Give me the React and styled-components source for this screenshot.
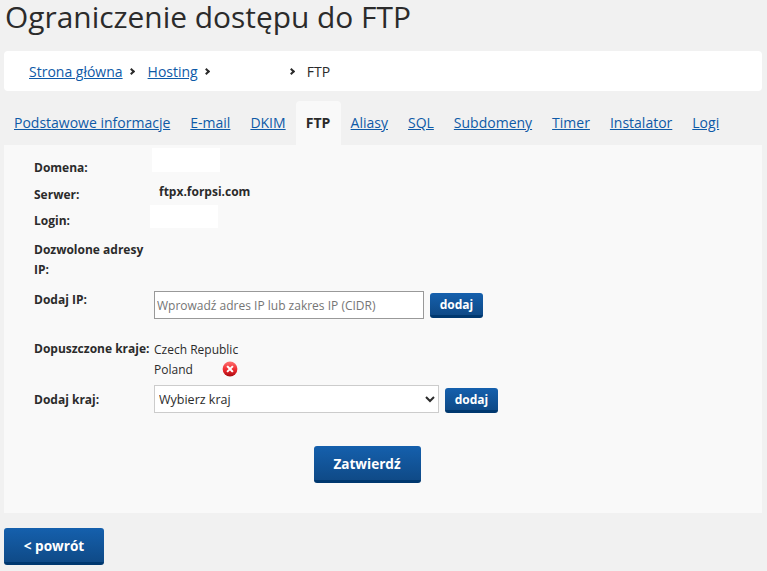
import styled, { createGlobalStyle } from 'styled-components';

const GlobalStyle = createGlobalStyle`
  html, body {
    margin: 0;
    padding: 0;
    background: #f1f1f1;
    color: #2b2b2b;
    font-family: "Open Sans", "Noto Sans", sans-serif;
    font-size: 14px;
  }
  * {
    box-sizing: border-box;
  }
`;

const tabs = ['Podstawowe informacje', 'E-mail', 'DKIM', 'FTP', 'Aliasy', 'SQL', 'Subdomeny', 'Timer', 'Instalator', 'Logi'];

function RemoveIcon() {
  return (
    <svg width="16" height="16" viewBox="0 0 16 16">
      <defs>
        <linearGradient id="removeFill" x1="0" y1="0" x2="0" y2="1">
          <stop offset="0%" stopColor="#ff6f6f" />
          <stop offset="55%" stopColor="#ee2a2f" />
          <stop offset="100%" stopColor="#a90a10" />
        </linearGradient>
      </defs>
      <circle cx="8" cy="8" r="7.4" fill="url(#removeFill)" />
      <path d="M5.8 5.8l4.4 4.4M10.2 5.8l-4.4 4.4" stroke="#fff" strokeWidth="2" strokeLinecap="square" />
    </svg>
  );
}

function App() {
  return (
    <Page>
      <GlobalStyle />
      <Title>Ograniczenie dostępu do FTP</Title>
      <Breadcrumb>
        <CrumbLink href="#">Strona główna</CrumbLink>
        <Chevron />
        <CrumbLink href="#">Hosting</CrumbLink>
        <Chevron />
        <HiddenCrumb />
        <Chevron />
        <CurrentCrumb>FTP</CurrentCrumb>
      </Breadcrumb>
      <TabBar>
        {tabs.map((tab) => (
          <Tab key={tab} href="#" $active={tab === 'FTP'}>{tab}</Tab>
        ))}
      </TabBar>
      <Panel>
        <InfoRow $height={27}>
          <Label>Domena:</Label>
          <Redacted $width={68} $height={24} $left={-2} $top={-10} />
        </InfoRow>
        <InfoRow $height={26}>
          <Label>Serwer:</Label>
          <ServerValue>ftpx.forpsi.com</ServerValue>
        </InfoRow>
        <InfoRow $height={29}>
          <Label>Login:</Label>
          <Redacted $width={68} $height={23} $left={-4} $top={-6} />
        </InfoRow>
        <InfoRow $height={50}>
          <Label>Dozwolone adresy IP:</Label>
        </InfoRow>
        <InfoRow $height={49}>
          <Label>Dodaj IP:</Label>
          <Controls $top={1}>
            <IpInput placeholder="Wprowadź adres IP lub zakres IP (CIDR)" />
            <SmallButton $top={2}>dodaj</SmallButton>
          </Controls>
        </InfoRow>
        <InfoRow $height={51}>
          <Label>Dopuszczone kraje:</Label>
          <CountryList>
            <Country>Czech Republic</Country>
            <Country>
              Poland
              <RemoveWrap><RemoveIcon /></RemoveWrap>
            </Country>
          </CountryList>
        </InfoRow>
        <InfoRow $height={56}>
          <Label>Dodaj kraj:</Label>
          <Controls $top={-5}>
            <CountrySelect defaultValue="">
              <option value="">Wybierz kraj</option>
            </CountrySelect>
            <SmallButton $top={3}>dodaj</SmallButton>
          </Controls>
        </InfoRow>
        <SubmitRow>
          <BigButton>Zatwierdź</BigButton>
        </SubmitRow>
      </Panel>
      <BackRow>
        <BackButton>&lt; powrót</BackButton>
      </BackRow>
    </Page>
  );
}

export default App;

const Page = styled.div`
  width: 767px;
  height: 571px;
  padding: 0 5px 0 4px;
  overflow: hidden;
`;

const Title = styled.h1`
  margin: 0;
  height: 51px;
  padding-left: 1px;
  font-size: 29.9px;
  font-weight: 400;
  line-height: 33px;
  color: #2b2b2b;
`;

const Breadcrumb = styled.nav`
  display: flex;
  align-items: center;
  height: 40px;
  padding-left: 25px;
  background: #fff;
  border-radius: 4px;
  font-size: 14px;
`;

const CrumbLink = styled.a`
  color: #0e5aa7;
  text-decoration: underline;
`;

const CurrentCrumb = styled.span`
  margin-left: -1px;
`;

const Chevron = styled.i`
  width: 5px;
  height: 5px;
  margin: 0 14px 0 6px;
  border-top: 2px solid #2b2b2b;
  border-right: 2px solid #2b2b2b;
  transform: rotate(45deg);
`;

const HiddenCrumb = styled.span`
  width: 60px;
`;

const TabBar = styled.div`
  display: flex;
  height: 44px;
  margin-top: 10px;
`;

const Tab = styled.a`
  display: flex;
  align-items: center;
  height: 44px;
  padding: 0 ${({ $active }) => ($active ? '10.2px' : '10px')} 2px;
  border-radius: 4px 4px 0 0;
  font-size: 14px;
  font-weight: ${({ $active }) => ($active ? 700 : 400)};
  color: ${({ $active }) => ($active ? '#2b2b2b' : '#0e5aa7')};
  background: ${({ $active }) => ($active ? '#f9f9f9' : 'transparent')};
  text-decoration: ${({ $active }) => ($active ? 'none' : 'underline')};
`;

const Panel = styled.section`
  height: 368px;
  padding: 13px 30px 0;
  background: #f9f9f9;
`;

const InfoRow = styled.div`
  display: flex;
  align-items: flex-start;
  height: ${({ $height }) => $height}px;
`;

const Label = styled.div`
  flex: none;
  width: 120px;
  font-size: 12px;
  font-weight: 700;
  line-height: 20px;
`;

const Redacted = styled.div`
  position: relative;
  left: ${({ $left }) => $left}px;
  top: ${({ $top }) => $top}px;
  width: ${({ $width }) => $width}px;
  height: ${({ $height }) => $height}px;
  background: #fff;
`;

const ServerValue = styled.div`
  margin: -3px 0 0 5px;
  font-size: 12px;
  font-weight: 700;
  line-height: 20px;
`;

const Controls = styled.div`
  display: flex;
  align-items: flex-start;
  gap: 6px;
  margin-top: ${({ $top }) => $top}px;
`;

const IpInput = styled.input`
  width: 270px;
  height: 28px;
  padding: 0 2px;
  border: 1px solid #999;
  background: #fff;
  font-family: inherit;
  font-size: 12px;
  &::placeholder {
    color: #757575;
  }
`;

const CountryList = styled.div`
  font-size: 12px;
`;

const Country = styled.div`
  display: flex;
  align-items: center;
  height: 20.5px;
`;

const RemoveWrap = styled.span`
  display: flex;
  margin: -2px 0 0 29.6px;
`;

const CountrySelect = styled.select`
  width: 285px;
  height: 28px;
  padding-left: 0;
  border: 1px solid #ccc;
  background: #fff;
  font-family: inherit;
  font-size: 12.5px;
  color: #2b2b2b;
`;

const ButtonBase = styled.button`
  display: block;
  border: 0;
  border-bottom: 3px solid #00386f;
  border-radius: 3px;
  background: linear-gradient(#1560ad, #0f4a87);
  color: #fff;
  font-family: inherit;
  font-weight: 700;
  padding: 0;
`;

const SmallButton = styled(ButtonBase)`
  width: 53px;
  height: 25px;
  margin-top: ${({ $top }) => $top}px;
  font-size: 12px;
`;

const SubmitRow = styled.div`
  display: flex;
  justify-content: center;
  padding-right: 32px;
`;

const BigButton = styled(ButtonBase)`
  width: 107px;
  height: 37px;
  font-size: 13.6px;
`;

const BackRow = styled.div`
  margin-top: 15px;
`;

const BackButton = styled(ButtonBase)`
  width: 100px;
  height: 37px;
  font-size: 13.6px;
`;
